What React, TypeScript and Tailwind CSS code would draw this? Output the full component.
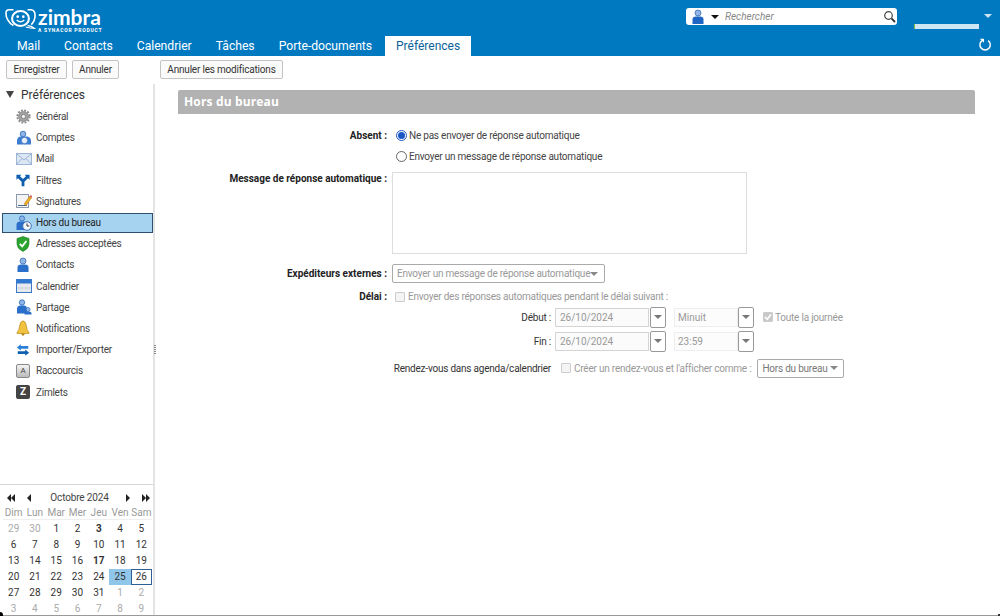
import React from "react";

const F = "[font-family:'Roboto','Open_Sans',sans-serif]";

function Person({ c = "#2a6fc9" }: { c?: string }) {
  return (
    <svg width="14" height="16" viewBox="0 0 14 16">
      <circle cx="7" cy="4" r="3" fill="#8fb6e6" stroke="#3d6fb5" strokeWidth="0.8" />
      <path d="M1.5 15 V10.5 Q1.5 7.5 5 7.5 H9 Q12.5 7.5 12.5 10.5 V15 Z" fill={c} />
    </svg>
  );
}

const icons: Record<string, React.ReactNode> = {
  gear: (
    <svg width="15" height="15" viewBox="0 0 16 16">
      <circle cx="8" cy="8" r="5.2" fill="#a8a8a8" stroke="#666" strokeWidth="0.8" />
      <circle cx="8" cy="8" r="6.6" fill="none" stroke="#8a8a8a" strokeWidth="2" strokeDasharray="2 1.45" />
      <circle cx="8" cy="8" r="2.3" fill="#f2f2f2" stroke="#666" strokeWidth="0.8" />
    </svg>
  ),
  comptes: (
    <svg width="16" height="16" viewBox="0 0 16 16">
      <circle cx="7" cy="4" r="2.8" fill="#8fb6e6" stroke="#2a66b8" strokeWidth="0.8" />
      <path d="M1 14.5 V11 Q1 6.5 5 6.5 H11 Q15 7 15 11 V14.5 Z" fill="#3b7dd0" />
      <circle cx="8.5" cy="10.5" r="3.2" fill="#e8f1fb" stroke="#2a66b8" strokeWidth="0.7" />
    </svg>
  ),
  mail: (
    <svg width="16" height="14" viewBox="0 0 16 14">
      <rect x="0.5" y="1.5" width="15" height="11" fill="#dbe7f5" stroke="#9db6d6" />
      <path d="M1 2 L8 8 L15 2 M1 12 L6 6.5 M15 12 L10 6.5" fill="none" stroke="#9db6d6" />
    </svg>
  ),
  filtres: (
    <svg width="14" height="13" viewBox="0 0 16 14">
      <path d="M0.5 0.5 H6 L4.6 2.2 L8 5.4 L11.4 2.2 L10 0.5 H15.5 V6 L13.7 4.4 L9.6 8.4 V13.5 H6.4 V8.4 L2.3 4.4 L0.5 6 Z" fill="#0f5fb0" />
    </svg>
  ),
  sig: (
    <svg width="16" height="16" viewBox="0 0 16 16">
      <rect x="0.5" y="1.5" width="12" height="13" fill="#f4f4f4" stroke="#8d9aab" />
      <path d="M2 12.5 H11" stroke="#4a6a90" />
      <path d="M8 11 L13.5 3.5 L15.5 5 L10 12.5 Z" fill="#eab021" stroke="#b5721a" strokeWidth="0.5" />
      <path d="M13.5 3.5 L15 1.8 L16 3.5 L15.5 5 Z" fill="#d9534f" />
    </svg>
  ),
  ooo: (
    <svg width="16" height="16" viewBox="0 0 16 16">
      <circle cx="6" cy="3.5" r="2.6" fill="#8fb6e6" stroke="#2a66b8" strokeWidth="0.8" />
      <path d="M0.5 15 V10 Q0.5 6.5 4 6.5 H8 Q11 6.5 11 10 V15 Z" fill="#2a6fc9" />
      <circle cx="11" cy="11" r="4.3" fill="#f4f8fd" stroke="#3d6fb5" />
      <path d="M11 8.5 V11 H13.2" fill="none" stroke="#333" />
    </svg>
  ),
  shield: (
    <svg width="14" height="16" viewBox="0 0 14 16">
      <path d="M7 0.5 L13 2.5 V8 Q13 12.5 7 15.5 Q1 12.5 1 8 V2.5 Z" fill="#2aa52f" stroke="#1f7b24" strokeWidth="0.6" />
      <path d="M3.8 7.8 L6.2 10.3 L10.4 5" fill="none" stroke="#fff" strokeWidth="1.8" />
    </svg>
  ),
  person: <Person />,
  cal: (
    <svg width="16" height="14" viewBox="0 0 16 14">
      <rect x="0.5" y="0.5" width="15" height="13" fill="#e6e9ee" stroke="#3a78c8" />
      <rect x="1" y="1" width="14" height="3.5" fill="#2f77cf" />
      <path d="M1.5 9 H14.5" stroke="#c4cad3" />
    </svg>
  ),
  share: (
    <svg width="16" height="16" viewBox="0 0 16 16">
      <circle cx="6" cy="3.5" r="2.7" fill="#8fb6e6" stroke="#2a66b8" strokeWidth="0.8" />
      <path d="M1 14.5 V10 Q1 6.5 4.5 6.5 H8 Q11 6.5 11 10 V14.5 Z" fill="#2a6fc9" />
      <circle cx="12" cy="10.5" r="2" fill="#8fb6e6" stroke="#2a66b8" strokeWidth="0.7" />
      <path d="M8.5 15.5 V14.5 Q8.5 12.6 11 12.6 H13 Q15.5 12.6 15.5 14.5 V15.5 Z" fill="#2a6fc9" />
    </svg>
  ),
  bell: (
    <svg width="14" height="16" viewBox="0 0 14 16">
      <path d="M7 0.8 Q4 1.5 3.6 6 Q3.4 10 1 12.5 V13.5 H13 V12.5 Q10.6 10 10.4 6 Q10 1.5 7 0.8 Z" fill="#f0c23d" stroke="#b98a1c" strokeWidth="0.7" />
      <circle cx="7" cy="14.3" r="1.4" fill="#b98a1c" />
    </svg>
  ),
  imp: (
    <svg width="14" height="14" viewBox="0 0 16 14">
      <path d="M1 4 L5.5 0.5 V2.5 H14 V5.5 H5.5 V7.5 Z" fill="#2a7fd8" />
      <path d="M15 10 L10.5 6.5 V8.5 H2 V11.5 H10.5 V13.5 Z" fill="#0f5fb0" />
    </svg>
  ),
};

const nav: [string, string][] = [
  ["gear", "Général"],
  ["comptes", "Comptes"],
  ["mail", "Mail"],
  ["filtres", "Filtres"],
  ["sig", "Signatures"],
  ["ooo", "Hors du bureau"],
  ["shield", "Adresses acceptées"],
  ["person", "Contacts"],
  ["cal", "Calendrier"],
  ["share", "Partage"],
  ["bell", "Notifications"],
  ["imp", "Importer/Exporter"],
  ["keyA", "Raccourcis"],
  ["keyZ", "Zimlets"],
];

function NavIcon({ k }: { k: string }) {
  if (k === "keyA")
    return (
      <div className="w-[14px] h-[14px] rounded-[2px] border border-[#888] bg-gradient-to-b from-[#f4f4f4] to-[#bbb] flex items-center justify-center text-[8px] leading-none text-[#444]">
        A
      </div>
    );
  if (k === "keyZ")
    return (
      <div className="w-[14px] h-[14px] rounded-[2px] bg-[#444] flex items-center justify-center text-[10px] font-bold leading-none text-white">
        Z
      </div>
    );
  return <>{icons[k]}</>;
}

const Caret = ({ c = "#777" }: { c?: string }) => (
  <span className="inline-block w-0 h-0 border-l-[4px] border-r-[4px] border-t-[4px] border-l-transparent border-r-transparent" style={{ borderTopColor: c }} />
);

function Btn({ children, className = "" }: { children: React.ReactNode; className?: string }) {
  return (
    <div className={`h-[19px] flex items-center justify-center border border-[#c4c4c4] rounded-[2px] bg-[#fafafa] text-[10px] tracking-[-0.2px] text-[#333] whitespace-nowrap ${className}`}>
      {children}
    </div>
  );
}

function DateField({ value }: { value: string }) {
  return (
    <div className="flex items-center">
      <div className="w-[94px] h-[19px] border border-[#d4d4d4] bg-[#fbfbfb] pl-[4px] leading-[17px] tracking-normal text-[#999]">{value}</div>
      <div className="w-[16px] h-[21px] ml-[1px] border border-[#999] rounded-[2px] flex items-center justify-center bg-white">
        <Caret />
      </div>
    </div>
  );
}

function TimeField({ value }: { value: string }) {
  return (
    <div className="flex items-center">
      <div className="w-[64px] h-[19px] border border-[#eee] bg-[#fcfcfc] pl-[3px] leading-[17px] tracking-normal text-[#999]">{value}</div>
      <div className="w-[16px] h-[21px] border border-[#999] rounded-[2px] flex items-center justify-center bg-white">
        <Caret />
      </div>
    </div>
  );
}

const Check = ({ on = false }: { on?: boolean }) => (
  <div className={`w-[10px] h-[10px] shrink-0 rounded-[1px] border border-[#ccc] flex items-center justify-center ${on ? "bg-[#c8c8c8]" : "bg-[#f4f4f4]"}`}>
    {on && (
      <svg width="8" height="8" viewBox="0 0 8 8">
        <path d="M1 4 L3.2 6.2 L7 1.5" fill="none" stroke="#fff" strokeWidth="1.6" />
      </svg>
    )}
  </div>
);

const Radio = ({ on = false }: { on?: boolean }) => (
  <div className={`w-[11px] h-[11px] rounded-full border bg-white flex items-center justify-center shrink-0 ${on ? "border-[#1a56c4]" : "border-[#666]"}`}>
    {on && <div className="w-[7px] h-[7px] rounded-full bg-[#1a56c4]" />}
  </div>
);

const weeks = [
  ["29", "30", "1", "2", "3", "4", "5"],
  ["6", "7", "8", "9", "10", "11", "12"],
  ["13", "14", "15", "16", "17", "18", "19"],
  ["20", "21", "22", "23", "24", "25", "26"],
  ["27", "28", "29", "30", "31", "1", "2"],
  ["3", "4", "5", "6", "7", "8", "9"],
];

function Day({ d, w, i }: { d: string; w: number; i: number }) {
  const off = (w === 0 && i < 2) || (w === 4 && i > 4) || w === 5;
  const bold = w === 2 && i === 4;
  const semi = w === 0 && i === 4;
  const today = w === 3 && i === 5;
  const sel = w === 3 && i === 6;
  return (
    <div
      className={`h-[16px] flex items-center justify-center text-[10px] leading-none ${off ? "text-[#aaa]" : "text-[#333]"} ${bold || semi ? "font-bold" : ""} ${today ? "bg-[#8fc6ea] text-[#111]" : ""} ${sel ? "border border-[#2f5f94]" : ""}`}
    >
      {d}
    </div>
  );
}

function Label({ children }: { children: React.ReactNode }) {
  return <div className="text-right text-[10px] tracking-normal font-bold text-[#222] whitespace-nowrap">{children}</div>;
}

function Logo() {
  return (
    <div className="flex items-start text-white">
      <svg width="31" height="22" viewBox="0 0 33 22" className="mr-[2px]">
        <g fill="none" stroke="#fff">
          <ellipse cx="16.5" cy="10.5" rx="9" ry="8" strokeWidth="2.2" />
          <path d="M9 1.2 H4.5 Q1 1.2 1 5 Q1 9 3 12 Q5 16 9 18" strokeWidth="1.7" />
          <path d="M24 1.2 H28 Q32 2 32 7 Q32 13 28 17" strokeWidth="1.7" />
          <path d="M24 18 Q28 18 31.5 21 Q27 21 22 19.5" strokeWidth="1.3" />
          <path d="M12.5 12 Q16.5 16 20.5 12" strokeWidth="1.5" />
        </g>
        <circle cx="13.5" cy="8.5" r="1.4" fill="#fff" />
        <circle cx="19.5" cy="8.5" r="1.4" fill="#fff" />
      </svg>
      <div className="flex flex-col items-start">
        <span className="text-[21px] leading-[18px] font-bold font-['Lato',sans-serif]">zimbra</span>
        <span className="text-[5px] leading-[6px] font-bold tracking-[0.75px] mt-[1px] whitespace-nowrap">A SYNACOR PRODUCT</span>
      </div>
    </div>
  );
}

export default function App() {
  const tabs = ["Mail", "Contacts", "Calendrier", "Tâches", "Porte-documents"];
  return (
    <div className={`relative w-[1000px] h-[616px] overflow-hidden bg-white flex flex-col ${F}`}>
      {/* header */}
      <header className="h-[56px] shrink-0 bg-[#0079c1] flex flex-col text-white">
        <div className="h-[36px] flex items-start justify-between pl-[5px]">
          <div className="mt-[8px]"><Logo /></div>
          <div className="flex items-start">
            <div className="mt-[8px] w-[211px] h-[17px] bg-white rounded-[3px] flex items-center pl-[5px] pr-[1px]">
              <Person c="#1f66c4" />
              <span className="ml-[6px] mr-[6px] flex"><Caret c="#111" /></span>
              <span className="flex-1 text-[10px] italic text-[#888]">Rechercher</span>
              <svg width="13" height="13" viewBox="0 0 13 13">
                <circle cx="5.5" cy="5.5" r="3.8" fill="none" stroke="#444" strokeWidth="1.2" />
                <path d="M8.4 8.4 L12 12" stroke="#333" strokeWidth="1.8" />
              </svg>
            </div>
            <div className="ml-[17px] mt-[24px] w-[65px] h-[5px] bg-[#cfe6f5] border-l border-[#7ac143]" />
            <div className="ml-[5px] mr-[8px] mt-[14px] flex"><Caret c="#cfe6f5" /></div>
          </div>
        </div>
        <div className="h-[20px] flex items-stretch justify-between">
          <nav className="flex items-stretch pl-[5px]">
            {tabs.map((t) => (
              <div key={t} className="px-[12px] flex items-center text-[12.2px] tracking-[-0.03px] leading-none text-white">{t}</div>
            ))}
            <div className="ml-[1px] w-[86px] flex items-center justify-center text-[12px] leading-none bg-white text-[#0a5f98]">Préférences</div>
          </nav>
          <svg width="14" height="14" viewBox="0 0 14 14" className="mr-[8px] mt-[2px]">
            <path d="M4 2.6 A5.2 5.2 0 1 0 10.2 2.6" fill="none" stroke="#fff" strokeWidth="1.4" />
            <path d="M1.8 0.8 H6 V4.8 Z" fill="#fff" />
          </svg>
        </div>
      </header>

      {/* toolbar */}
      <div className="h-[28px] shrink-0 flex items-center pl-[6px] pb-[1px]">
        <Btn className="w-[61px]">Enregistrer</Btn>
        <Btn className="ml-[5px] w-[47px]">Annuler</Btn>
        <Btn className="ml-[41px] w-[123px]">Annuler les modifications</Btn>
      </div>

      <div className="flex-1 flex min-h-0">
        {/* sidebar */}
        <aside className="w-[153px] shrink-0 flex flex-col">
          <div className="h-[21px] flex items-center pl-[6px] text-[12px] text-[#333]">
            <svg width="8" height="7" viewBox="0 0 8 7" className="mr-[7px]">
              <path d="M0 0 H8 L4 7 Z" fill="#444" />
            </svg>
            <span>Préférences</span>
          </div>
          <div className="flex flex-col mt-[1px] pl-[2px]">
            {nav.map(([k, label]) => {
              const active = label === "Hors du bureau";
              return (
                <div key={label} className="h-[21.2px] flex items-center text-[10px] tracking-[-0.25px] text-[#444]">
                  <div className={`w-full h-[20px] flex items-center ${active ? "bg-[#a6d3f0] border border-[#2f4f6f] text-[#222]" : ""}`}>
                    <div className={`w-[34px] shrink-0 flex items-center pl-[14px] ${active ? "-ml-[1px]" : ""}`}><NavIcon k={k} /></div>
                    <span>{label}</span>
                  </div>
                </div>
              );
            })}
          </div>
          <div className="flex-1" />
          {/* calendar */}
          <div className="h-[132px] border-t border-[#d8d8d8] pl-[3px] pr-[1px] shrink-0">
            <div className="h-[25px] flex items-center text-[10px] tracking-[-0.15px] text-[#444]">
              <svg width="32" height="8" viewBox="0 0 32 8" className="ml-[4px]">
                <path d="M4 0 V8 L0 4 Z M8 0 V8 L4 4 Z M24 0 V8 L20 4 Z" fill="#222" />
              </svg>
              <span className="flex-1 text-center pr-[6px]">Octobre 2024</span>
              <svg width="24" height="8" viewBox="0 0 24 8" className="mr-[2px]">
                <path d="M0 0 V8 L4 4 Z M16 0 V8 L20 4 Z M20 0 V8 L24 4 Z" fill="#222" />
              </svg>
            </div>
            <div className="grid grid-cols-7 h-[14px] mt-[-4px] mb-[1px] border-b border-[#eee]">
              {["Dim", "Lun", "Mar", "Mer", "Jeu", "Ven", "Sam"].map((d) => (
                <div key={d} className="flex items-center justify-center text-[10px] leading-none text-[#999]">{d}</div>
              ))}
            </div>
            <div className="grid grid-cols-7">
              {weeks.map((wk, w) => wk.map((d, i) => <Day key={`${w}-${i}`} d={d} w={w} i={i} />))}
            </div>
          </div>
        </aside>

        {/* splitter */}
        <div className="w-[2px] shrink-0 bg-[#e4e4e4] relative">
          <div className="absolute left-[1px] top-[261px] w-[2px] h-[10px] [background:repeating-linear-gradient(#888_0,#888_1px,transparent_1px,transparent_2px)]" />
        </div>

        {/* main */}
        <main className="flex-1 pl-[23px] pr-[25px] pt-[6px] min-w-0">
          <div className="h-[24px] bg-[#b2b2b2] rounded-t-[2px] pl-[6px] flex items-center font-['Open_Sans',sans-serif] text-[12px] tracking-[0.15px] font-bold text-white">Hors du bureau</div>
          <div className="mt-[11px] text-[10px] tracking-[-0.22px] text-[#444]">
            <div className="flex h-[21px] items-center">
              <div className="w-[209px]"><Label>Absent :</Label></div>
              <div className="ml-[9px] flex items-center gap-[2px]"><Radio on />Ne pas envoyer de réponse automatique</div>
            </div>
            <div className="flex h-[21px] items-center">
              <div className="ml-[218px] flex items-center gap-[2px]"><Radio />Envoyer un message de réponse automatique</div>
            </div>
            <div className="flex mt-[5px]">
              <div className="w-[209px] -mt-[1px]"><Label>Message de réponse automatique :</Label></div>
              <div className="ml-[5px] w-[355px] h-[82px] border border-[#ddd] bg-white" />
            </div>
            <div className="flex items-center mt-[10px]">
              <div className="w-[209px]"><Label>Expéditeurs externes :</Label></div>
              <div className="ml-[5px] w-[213px] h-[19px] border border-[#aaa] rounded-[2px] pl-[4px] pr-[6px] flex items-center justify-between text-[#999] whitespace-nowrap">
                Envoyer un message de réponse automatique<Caret c="#888" />
              </div>
            </div>
            <div className="flex items-center mt-[6px] h-[15px]">
              <div className="w-[209px]"><Label>Délai :</Label></div>
              <div className="ml-[8px] flex items-center gap-[3px] text-[#999]"><Check />Envoyer des réponses automatiques pendant le délai suivant :</div>
            </div>
            <div className="flex items-center mt-[1px] h-[24px]">
              <div className="w-[373px] text-right text-[#333]">Début :</div>
              <div className="ml-[4px]"><DateField value="26/10/2024" /></div>
              <div className="ml-[8px]"><TimeField value="Minuit" /></div>
              <div className="ml-[9px] flex items-center gap-[2px] text-[#999]"><Check on />Toute la journée</div>
            </div>
            <div className="flex items-center h-[24px]">
              <div className="w-[373px] text-right text-[#333]">Fin :</div>
              <div className="ml-[4px]"><DateField value="26/10/2024" /></div>
              <div className="ml-[8px]"><TimeField value="23:59" /></div>
            </div>
            <div className="flex items-center mt-[4px] h-[22px]">
              <div className="w-[373px] text-right text-[#333] whitespace-nowrap">Rendez-vous dans agenda/calendrier</div>
              <div className="ml-[10px] flex items-center gap-[3px] text-[#999] whitespace-nowrap"><Check />Créer un rendez-vous et l'afficher comme :</div>
              <div className="ml-[6px] w-[87px] h-[19px] border border-[#aaa] rounded-[2px] pl-[4px] pr-[5px] flex items-center justify-between text-[#777] whitespace-nowrap">Hors du bureau<Caret c="#888" /></div>
            </div>
          </div>
        </main>
      </div>
      <div className="h-[1px] shrink-0 -mt-[1px] bg-[#999] relative" />
      <div className="absolute left-0 bottom-0 w-[3px] h-[4px] bg-black rounded-tr-[3px]" />
      <div className="absolute right-0 bottom-0 w-[2px] h-[2px] bg-[#333]" />
    </div>
  );
}
